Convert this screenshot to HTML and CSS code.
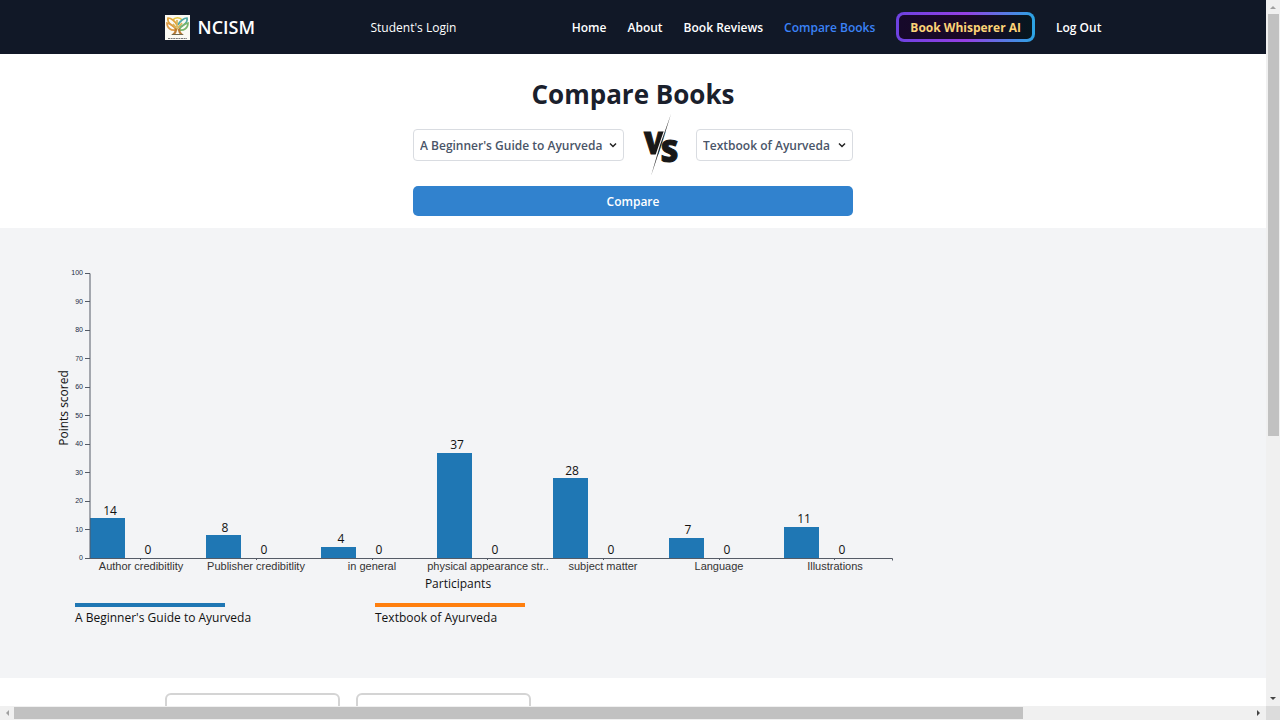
FILE: index.html
```html
<!DOCTYPE html>
<html lang="en">
<head>
<meta charset="utf-8">
<meta name="viewport" content="width=device-width, initial-scale=1">
<title>Compare Books</title>
<link rel="stylesheet" href="styles.css">
</head>
<body>
<div class="window">
  <div class="page">
    <header class="site-header">
      <div class="container header-row">
        <a class="brand" href="#">
          <svg class="brand-logo" viewBox="0 0 25 25" aria-hidden="true">
            <rect width="25" height="25" fill="#fbfaf4"/>
            <g fill="none" stroke-width="1.7">
              <path d="M8 5a5 4 0 0 1 9 0" stroke="#e8c53c"/>
              <path d="M12 10C10 6 6 3 3 3c-1 4 3 8 8 9" stroke="#e2a33a"/>
              <path d="M2 8c0 5 4 8 9 7C9 11 6 9 2 8z" stroke="#dd9a45"/>
              <path d="M13 10c2-4 6-7 9-7 1 4-3 8-8 9" stroke="#4fa9a4"/>
              <path d="M23 8c0 5-4 8-9 7 2-4 5-6 9-7z" stroke="#79b56b"/>
              <path d="M12 5v7M8 9l4 5 5-6" stroke="#d8b457"/>
            </g>
            <path d="M10 13c0 3-1 5-4 7h3c2-1 3-3 3-6zM15 13c0 3 1 5 4 7h-3c-2-1-3-3-3-6z" fill="#b97b35"/>
            <path d="M7 19.500h11" stroke="#6d684e" stroke-width="1"/>
            <path d="M3 23.500h19" stroke="#777" stroke-width="1" stroke-dasharray="2 .6"/>
          </svg>
          <span class="brand-name">NCISM</span>
        </a>
        <span class="login-role">Student's Login</span>
        <nav class="nav">
          <a href="#">Home</a>
          <a href="#">About</a>
          <a href="#">Book Reviews</a>
          <a class="active" href="#">Compare Books</a>
          <button class="ai-button" type="button">Book Whisperer AI</button>
          <a href="#">Log Out</a>
        </nav>
      </div>
    </header>

    <main>
      <form class="compare-form">
        <h1 class="title">Compare Books</h1>
        <div class="pickers">
          <div class="picker">
            <select class="select" aria-label="First book">
              <option>A Beginner's Guide to Ayurveda</option>
            </select>
            <svg class="chevron" viewBox="0 0 8 8" aria-hidden="true"><path d="M1 2.500 4 5.500l3-3"/></svg>
          </div>
          <svg class="versus" viewBox="0 0 40 64" role="img" aria-label="VS">
            <text class="versus-letters" x="4" y="41">V<tspan dx="-4" dy="8">S</tspan></text>
            <path class="versus-gap" d="M31 0 9 64"/>
            <path class="versus-slash" d="M31 1 21 33 11 63 20 32z"/>
          </svg>
          <div class="picker">
            <select class="select" aria-label="Second book">
              <option>Textbook of Ayurveda</option>
            </select>
            <svg class="chevron" viewBox="0 0 8 8" aria-hidden="true"><path d="M1 2.500 4 5.500l3-3"/></svg>
          </div>
        </div>
        <button class="compare-button" type="button">Compare</button>
      </form>

      <section class="chart-panel">
        <svg class="chart" viewBox="0 0 900 450" width="900" height="450" role="img" aria-label="Points scored by category">
          <g class="bars">
            <rect x="90" y="290" width="35" height="40"/>
            <rect x="206" y="307" width="35" height="23"/>
            <rect x="321" y="319" width="35" height="11"/>
            <rect x="437" y="225" width="35" height="105"/>
            <rect x="553" y="250" width="35" height="80"/>
            <rect x="669" y="310" width="35" height="20"/>
            <rect x="784" y="299" width="35" height="31"/>
          </g>
          <path class="axis" d="M85 45.500h5v285M90 330.500h802.500v2M85 330.500h5M85 301.500h5M85 273.500h5M85 244.500h5M85 216.500h5M85 187.500h5M85 159.500h5M85 130.500h5M85 102.500h5M85 73.500h5"/>
          <path class="axis" d="M140.500 330v2M256.500 330v2M372.500 330v2M487.500 330v2M603.500 330v2M719.500 330v2M834.500 330v2"/>
          <g class="tick-y">
            <text x="83" y="47">100</text>
            <text x="83" y="76">90</text>
            <text x="83" y="104">80</text>
            <text x="83" y="133">70</text>
            <text x="83" y="161">60</text>
            <text x="83" y="190">50</text>
            <text x="83" y="218">40</text>
            <text x="83" y="247">30</text>
            <text x="83" y="275">20</text>
            <text x="83" y="304">10</text>
            <text x="83" y="332">0</text>
          </g>
          <g class="value">
            <text x="110" y="287">14</text><text x="148" y="326">0</text>
            <text x="225" y="304">8</text><text x="264" y="326">0</text>
            <text x="341" y="315">4</text><text x="379" y="326">0</text>
            <text x="457" y="221">37</text><text x="495" y="326">0</text>
            <text x="572" y="247">28</text><text x="611" y="326">0</text>
            <text x="688" y="306">7</text><text x="727" y="326">0</text>
            <text x="804" y="295">11</text><text x="842" y="326">0</text>
          </g>
          <g class="tick-x">
            <text x="141" y="342">Author credibitlity</text>
            <text x="256" y="342">Publisher credibitlity</text>
            <text x="372" y="342">in general</text>
            <text x="488" y="342">physical appearance str..</text>
            <text x="603" y="342">subject matter</text>
            <text x="719" y="342">Language</text>
            <text x="835" y="342">Illustrations</text>
          </g>
          <text class="axis-title" x="458" y="360">Participants</text>
          <text class="axis-title" transform="translate(68 180) rotate(-90)">Points scored</text>
          <rect class="key-first" x="75" y="375" width="150" height="4"/>
          <text class="key-text" x="75" y="394">A Beginner's Guide to Ayurveda</text>
          <rect class="key-second" x="375" y="375" width="150" height="4"/>
          <text class="key-text" x="375" y="394">Textbook of Ayurveda</text>
        </svg>
      </section>

      <section class="container cards">
        <article class="card"></article>
        <article class="card"></article>
      </section>
    </main>
  </div>

  <div class="bar bar-y" aria-hidden="true">
    <svg class="arrow muted" viewBox="0 0 14 14"><path d="m4 9 3-3 3 3z"/></svg>
    <div class="track"><div class="thumb"></div></div>
    <svg class="arrow" viewBox="0 0 14 14"><path d="m4 5 3 3 3-3z"/></svg>
  </div>
  <div class="bar bar-x" aria-hidden="true">
    <svg class="arrow muted" viewBox="0 0 14 14"><path d="M9 4 6 7l3 3z"/></svg>
    <div class="track"><div class="thumb"></div></div>
    <svg class="arrow" viewBox="0 0 14 14"><path d="m5 4 3 3-3 3z"/></svg>
  </div>
  <div class="corner"></div>
</div>
</body>
</html>
```

FILE: styles.css
```css
* {
  box-sizing: border-box;
}

body {
  margin: 0;
  font-family: "Open Sans", "Noto Sans", sans-serif;
  font-size: 12px;
  color: #1a202c;
  background: #fff;
}

a {
  color: inherit;
  text-decoration: none;
}

.window {
  display: grid;
  grid-template: minmax(0, 1fr) 14px / minmax(0, 1fr) 14px;
  height: 100vh;
}

.page {
  overflow: hidden;
}

.container {
  width: 74%;
  margin: 0 auto;
}

.site-header {
  background: #111827;
  color: #fff;
}

.header-row {
  display: flex;
  align-items: center;
  justify-content: space-between;
  height: 54px;
}

.brand {
  display: flex;
  align-items: center;
  gap: 8px;
}

.brand-logo {
  width: 25px;
  height: 25px;
}

.brand-name {
  font-size: 18px;
  line-height: 26px;
  font-weight: 600;
}

.nav {
  display: flex;
  align-items: center;
  gap: 21px;
  font-weight: 600;
}

.active {
  color: #3b82f6;
}

.ai-button {
  height: 30px;
  padding: 0 11px;
  border: 3px solid transparent;
  border-radius: 8px;
  background:
    linear-gradient(90deg, #16092a, #1a0826 50%, #06171f) padding-box,
    linear-gradient(90deg, #6d42e0, #9540e4 50%, #2ba5e4) border-box;
  color: #fcd377;
  font: inherit;
  font-weight: 700;
}

.compare-form {
  display: flex;
  flex-direction: column;
  width: 440px;
  max-width: 100%;
  margin: 0 auto;
  padding: 21px 0 12px;
}

.title {
  margin: 0;
  font-size: 26px;
  line-height: 38px;
  font-weight: 700;
  text-align: center;
}

.pickers {
  display: grid;
  grid-template-columns: 211fr 72px 157fr;
  align-items: center;
  height: 62px;
  margin-bottom: 11px;
}

.picker {
  position: relative;
}

.select {
  display: block;
  width: 100%;
  height: 32px;
  padding: 0 20px 0 6px;
  border: 1px solid #d9dce1;
  border-radius: 4px;
  background: #fff;
  color: #4a5568;
  font: inherit;
  font-weight: 600;
  appearance: none;
}

.chevron {
  position: absolute;
  top: 12px;
  right: 7px;
  width: 8px;
  height: 8px;
  fill: none;
  stroke: #222;
  stroke-width: 1.5;
  pointer-events: none;
}

.versus {
  width: 40px;
  height: 64px;
  justify-self: center;
}

.versus-letters {
  font-family: "Open Sans", sans-serif;
  font-size: 30px;
  font-weight: 800;
  fill: #181818;
  stroke: #181818;
}

.versus-gap {
  stroke: #fff;
  stroke-width: 2;
}

.versus-slash {
  fill: #222;
}

.compare-button {
  height: 30px;
  border: 0;
  border-radius: 5px;
  background: #3182ce;
  color: #fff;
  font: inherit;
  font-weight: 600;
}

.chart-panel {
  overflow: hidden;
  background: #f3f4f6;
}

.chart {
  display: block;
}

.bars,
.key-first {
  fill: #1f77b4;
}

.key-second {
  fill: #ff7f0e;
}

.axis {
  fill: none;
  stroke: #555b66;
}

.tick-y {
  font: 7px "Liberation Sans", sans-serif;
  fill: #1a2c44;
  text-anchor: end;
}

.tick-x {
  font: 11px "Liberation Sans", sans-serif;
  fill: #333;
  text-anchor: middle;
}

.value,
.axis-title {
  text-anchor: middle;
}

.value,
.axis-title,
.key-text {
  font-size: 12px;
  fill: #111;
}

.cards {
  display: flex;
  gap: 16px;
  padding-top: 15px;
}

.card {
  width: 175px;
  height: 260px;
  border: 2px solid #d4d4d4;
  border-radius: 6px;
}

.bar {
  display: flex;
  background: #f0f0f0;
}

.bar-y {
  flex-direction: column;
}

.track {
  flex: 1;
}

.thumb {
  background: #c1c1c1;
}

.bar-y .thumb {
  height: 62.3%;
  margin: 0 1px 0 2px;
}

.bar-x .thumb {
  width: 81.5%;
  height: 12px;
  margin-top: 1px;
}

.arrow {
  width: 14px;
  height: 14px;
  fill: #444;
}

.muted {
  fill: #a0a0a0;
}

.corner {
  background: #dcdcdc;
}
```
